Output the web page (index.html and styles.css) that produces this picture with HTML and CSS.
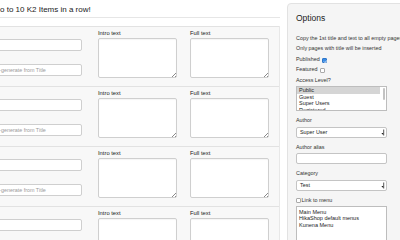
FILE: index.html
```html
<!DOCTYPE html>
<html>
<head>
<meta charset="utf-8">
<link rel="stylesheet" href="styles.css">
</head>
<body>
<div class="page">
  <main class="main">
    <h1 class="title">o to 10 K2 Items in a row!</h1>
    <div class="rows">
      <div class="row">
        <div class="col-main">
          <input class="inp" type="text" aria-label="Title">
          <input class="inp" type="text" aria-label="Alias" placeholder="Auto-generate from Title">
        </div>
        <div class="col-text"><label class="ta-lbl">Intro text</label><div class="ta-wrap"><textarea class="ta"></textarea></div></div>
        <div class="col-text col-full"><label class="ta-lbl">Full text</label><div class="ta-wrap"><textarea class="ta"></textarea></div></div>
      </div>
      <div class="row">
        <div class="col-main">
          <input class="inp" type="text" aria-label="Title">
          <input class="inp" type="text" aria-label="Alias" placeholder="Auto-generate from Title">
        </div>
        <div class="col-text"><label class="ta-lbl">Intro text</label><div class="ta-wrap"><textarea class="ta"></textarea></div></div>
        <div class="col-text col-full"><label class="ta-lbl">Full text</label><div class="ta-wrap"><textarea class="ta"></textarea></div></div>
      </div>
      <div class="row">
        <div class="col-main">
          <input class="inp" type="text" aria-label="Title">
          <input class="inp" type="text" aria-label="Alias" placeholder="Auto-generate from Title">
        </div>
        <div class="col-text"><label class="ta-lbl">Intro text</label><div class="ta-wrap"><textarea class="ta"></textarea></div></div>
        <div class="col-text col-full"><label class="ta-lbl">Full text</label><div class="ta-wrap"><textarea class="ta"></textarea></div></div>
      </div>
      <div class="row">
        <div class="col-main">
          <input class="inp" type="text" aria-label="Title">
          <input class="inp" type="text" aria-label="Alias" placeholder="Auto-generate from Title">
        </div>
        <div class="col-text"><label class="ta-lbl">Intro text</label><div class="ta-wrap"><textarea class="ta"></textarea></div></div>
        <div class="col-text col-full"><label class="ta-lbl">Full text</label><div class="ta-wrap"><textarea class="ta"></textarea></div></div>
      </div>
    </div>
  </main>
  <aside class="side">
    <h2 class="side-title">Options</h2>
    <p class="opt opt-first">Copy the 1st title and text to all empty pages</p>
    <p class="opt">Only pages with title will be inserted</p>
    <p class="opt">Published <span class="cb cb-on"><svg viewBox="0 0 6 6" width="5" height="5"><path d="M1.2 3.1 L2.5 4.4 L4.9 1.5" fill="none" stroke="#fff" stroke-width="1"/></svg></span></p>
    <p class="opt">Featured <span class="cb"></span></p>
    <p class="opt opt-last">Access Level?</p>
    <div class="listbox lb-access">
      <div class="lb-items">
        <div class="lb-item lb-sel">Public</div>
        <div class="lb-item">Guest</div>
        <div class="lb-item">Super Users</div>
        <div class="lb-item">Registered</div>
      </div>
      <span class="thumb"></span>
    </div>
    <div class="field">
      <div class="field-lbl">Author</div>
      <div class="select"><span class="select-val">Super User</span><span class="arrow"><svg viewBox="0 0 4 7" width="4" height="7"><rect x="2.2" y="0.5" width="1" height="6" fill="#555"/><path d="M0.3 4 L2.2 4 L2.2 6 Z" fill="#222"/></svg></span></div>
    </div>
    <div class="field">
      <div class="field-lbl">Author alias</div>
      <div class="tinput"></div>
    </div>
    <div class="field">
      <div class="field-lbl">Category</div>
      <div class="select"><span class="select-val">Test</span><span class="arrow"><svg viewBox="0 0 4 7" width="4" height="7"><rect x="2.2" y="0.5" width="1" height="6" fill="#555"/><path d="M0.3 4 L2.2 4 L2.2 6 Z" fill="#222"/></svg></span></div>
    </div>
    <div class="field">
      <div class="field-lbl"><span class="cb cb-link"></span>Link to menu</div>
      <div class="listbox lb-menu">
        <div class="lb-items">
          <div class="lb-item">Main Menu</div>
          <div class="lb-item">HikaShop default menus</div>
          <div class="lb-item">Kunena Menu</div>
        </div>
      </div>
    </div>
  </aside>
</div>
</body>
</html>
```
FILE: styles.css
```css
html, body {
  margin: 0;
  padding: 0;
}
body {
  width: 400px;
  height: 240px;
  overflow: hidden;
  background: #fff;
  font-family: "Liberation Sans", Arial, sans-serif;
  color: #333;
}
.page {
  display: flex;
  align-items: flex-start;
}
.main {
  width: 280px;
  flex: none;
}
.title {
  margin: 0;
  padding: 6px 0 3px;
  font-size: 8px;
  line-height: 8px;
  font-weight: normal;
  color: #222;
  border-bottom: 1px solid #e6e6e6;
  white-space: nowrap;
}
.rows {
  margin-top: 8px;
  border-right: 1px solid #e8e8e8;
}
.row {
  display: flex;
  align-items: flex-start;
  border-top: 1px solid #e2e2e2;
  background: #f8f8f8;
  padding: 2.5px 0 8px;
}
.col-main {
  width: 98px;
  margin-left: -16px;
  margin-top: 9px;
  display: flex;
  flex-direction: column;
  gap: 13px;
  flex: none;
}
.inp {
  display: block;
  width: 98px;
  height: 12px;
  box-sizing: border-box;
  border: 1px solid #cfcfcf;
  border-radius: 2px;
  background: #fff;
  padding: 0 0 0 3px;
  margin: 0;
  font-family: "Liberation Sans", Arial, sans-serif;
  font-size: 5.4px;
  color: #333;
  outline: none;
}
.inp::placeholder {
  color: #9a9a9a;
}
.col-text {
  width: 79px;
  margin-left: 16px;
  flex: none;
  display: flex;
  flex-direction: column;
}
.col-full {
  margin-left: 13px;
}
.ta-lbl {
  font-size: 5.8px;
  line-height: 7px;
  height: 7px;
  margin-bottom: 1.5px;
  color: #222;
}
.ta-wrap {
  position: relative;
  height: 40px;
}
.ta-wrap::after {
  content: "";
  position: absolute;
  right: 1px;
  bottom: 1px;
  width: 4px;
  height: 4px;
  background: linear-gradient(135deg, transparent 48%, #8a8a8a 48%, #8a8a8a 60%, transparent 60%, transparent 76%, #8a8a8a 76%, #8a8a8a 90%, transparent 90%);
}
.ta {
  display: block;
  width: 79px;
  height: 40px;
  box-sizing: border-box;
  margin: 0;
  border: 1px solid #cfcfcf;
  border-radius: 2px;
  background: #fff;
  resize: none;
  outline: none;
  box-shadow: inset 0 1px 1px rgba(0,0,0,0.04);
}
.side {
  width: 130px;
  height: 270px;
  flex: none;
  margin: 3px 0 0 7px;
  box-sizing: border-box;
  padding: 9px 0 0 8px;
  background: #f5f5f5;
  border: 1px solid #e2e2e2;
  border-radius: 4px;
}
.side-title {
  margin: 0;
  font-size: 8.5px;
  line-height: 10px;
  font-weight: normal;
  color: #222;
}
.opt {
  margin: 0 0 3.5px;
  font-size: 5.4px;
  line-height: 7px;
  height: 7px;
  white-space: nowrap;
  display: flex;
  align-items: center;
}
.opt-first {
  margin-top: 11.5px;
}
.opt-last {
  margin-bottom: 2.5px;
}
.cb {
  display: inline-block;
  width: 5px;
  height: 5px;
  box-sizing: border-box;
  border: 0.6px solid #aaa;
  border-radius: 1px;
  background: #fff;
  margin-left: 2px;
  position: relative;
  top: 1px;
}
.cb svg {
  display: block;
}
.cb-on {
  background: #3c8de6;
  border-color: #2f76c8;
}
.cb-link {
  margin: 0 0.5px 0 0;
  top: 0;
}
.listbox {
  position: relative;
  width: 91px;
  box-sizing: border-box;
  border: 1px solid #bdbdbd;
  background: #fff;
  overflow: hidden;
}
.lb-access {
  height: 25px;
}
.lb-menu {
  height: 45px;
  padding-top: 1.5px;
}
.lb-items {
  margin-right: 6px;
}
.lb-item {
  font-size: 5.5px;
  line-height: 6.7px;
  height: 6.7px;
  padding-left: 2px;
  white-space: nowrap;
  color: #222;
}
.lb-sel {
  background: #d5d5d5;
}
.thumb {
  position: absolute;
  right: 1px;
  top: 1px;
  width: 2.5px;
  height: 12px;
  border-radius: 2px;
  background: #c3c3c3;
}
.field {
  margin-top: 6px;
}
.field-lbl {
  font-size: 5.4px;
  line-height: 7px;
  height: 7px;
  margin-bottom: 2.5px;
  display: flex;
  align-items: center;
  white-space: nowrap;
}
.select {
  width: 91px;
  height: 11px;
  box-sizing: border-box;
  border: 1px solid #c4c4c4;
  border-radius: 2px;
  background: #fff;
  display: flex;
  align-items: center;
  padding: 0 1px 0 3px;
}
.select-val {
  flex: 1;
  font-size: 5.4px;
  color: #222;
}
.arrow svg {
  display: block;
}
.tinput {
  width: 91px;
  height: 11px;
  box-sizing: border-box;
  border: 1px solid #c4c4c4;
  border-radius: 2px;
  background: #fff;
}
```
